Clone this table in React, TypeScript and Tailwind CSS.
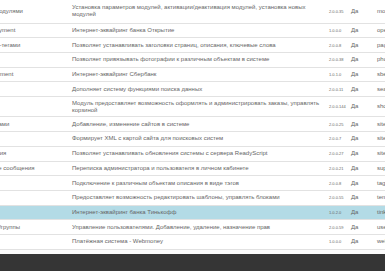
import React from 'react';

type Row = {
  name: string;
  description: string;
  version: string;
  id: string;
  tall?: boolean;
  active?: boolean;
};

const rows: Row[] = [
  { name: 'Управление модулями', description: 'Установка параметров модулей, активации/деактивация модулей, установка новых модулей', version: '2.0.0.35', id: 'modcontrol', tall: true },
  { name: 'Open Bank Payment', description: 'Интернет-эквайринг банка Открытие', version: '1.0.0.0', id: 'openbank' },
  { name: 'Работа с мета-тегами', description: 'Позволяет устанавливать заголовки страниц, описания, ключевые слова', version: '2.0.0.8', id: 'pageseo' },
  { name: 'Фотографии', description: 'Позволяет привязывать фотографии к различным объектам в системе', version: '2.0.0.38', id: 'photo' },
  { name: 'Sber Bank Payment', description: 'Интернет-эквайринг Сбербанк', version: '1.0.1.0', id: 'sberbank' },
  { name: 'Поиск', description: 'Дополняет систему функциями поиска данных', version: '2.0.0.11', id: 'search' },
  { name: 'Магазин', description: 'Модуль предоставляет возможность оформлять и администрировать заказы, управлять корзиной', version: '2.0.0.144', id: 'shop', tall: true },
  { name: 'Работа с сайтами', description: 'Добавление, изменение сайтов в системе', version: '2.0.0.25', id: 'site' },
  { name: 'Карта сайта', description: 'Формирует XML с картой сайта для поисковых систем', version: '2.0.0.7', id: 'sitemap' },
  { name: 'Автообновления', description: 'Позволяет устанавливать обновления системы с сервера ReadyScript', version: '2.0.0.27', id: 'siteupdate' },
  { name: 'Персональные сообщения', description: 'Переписка администратора и пользователя в личном кабинете', version: '2.0.0.21', id: 'support' },
  { name: 'Теги', description: 'Подключение к различным объектам описания в виде тэгов', version: '2.0.0.8', id: 'tags' },
  { name: 'Шаблоны', description: 'Предоставляет возможность редактировать шаблоны, управлять блоками', version: '2.0.0.55', id: 'templates' },
  { name: 'Тинькофф', description: 'Интернет-эквайринг банка Тинькофф', version: '1.0.2.0', id: 'tinkoff', active: true },
  { name: 'Пользователи/группы', description: 'Управление пользователями. Добавление, удаление, назначение прав', version: '2.0.0.59', id: 'users' },
  { name: 'Webmoney', description: 'Платёжная система - Webmoney', version: '1.0.0.0', id: 'webmoney' },
];

export default function App() {
  return (
    <div className="w-[385px] h-[271px] overflow-hidden flex flex-col bg-[#fbfbfb] font-['Liberation_Sans',Arial,sans-serif] text-[#666]">
      <div className="h-[254px] overflow-hidden">
        <table className="table-fixed border-collapse -ml-[44px] w-[474px]">
          <colgroup>
            <col className="w-[112px]" />
            <col className="w-[257px]" />
            <col className="w-[22px]" />
            <col className="w-[26px]" />
            <col />
          </colgroup>
          <tbody>
            {rows.map((row, i) => (
              <tr
                key={row.id}
                className={`${row.tall ? (i === 0 ? 'h-[23px]' : 'h-[20.5px]') : 'h-[14.7px]'} ${i === 0 ? '' : 'border-t'} border-[#e2e2e2] ${
                  row.active ? 'bg-[#b3dbe6]' : 'bg-white'
                } ${i === rows.length - 1 ? 'border-b' : ''}`}
              >
                <td className="px-[4px] py-0 align-middle whitespace-nowrap text-[6px] leading-[7px]">{row.name}</td>
                <td className="px-[4px] py-0 align-middle text-[6px] leading-[7px]">{row.description}</td>
                <td className="pl-[4px] py-0 align-middle whitespace-nowrap text-[4px] leading-[7px]">{row.version}</td>
                <td className="pl-[4px] py-0 align-middle text-[6px] leading-[7px]">Да</td>
                <td className="pl-[4px] py-0 align-middle whitespace-nowrap text-[6px] leading-[7px]">{row.id}</td>
              </tr>
            ))}
          </tbody>
        </table>
      </div>
      <div className="flex-1 bg-[#353535]" />
    </div>
  );
}
